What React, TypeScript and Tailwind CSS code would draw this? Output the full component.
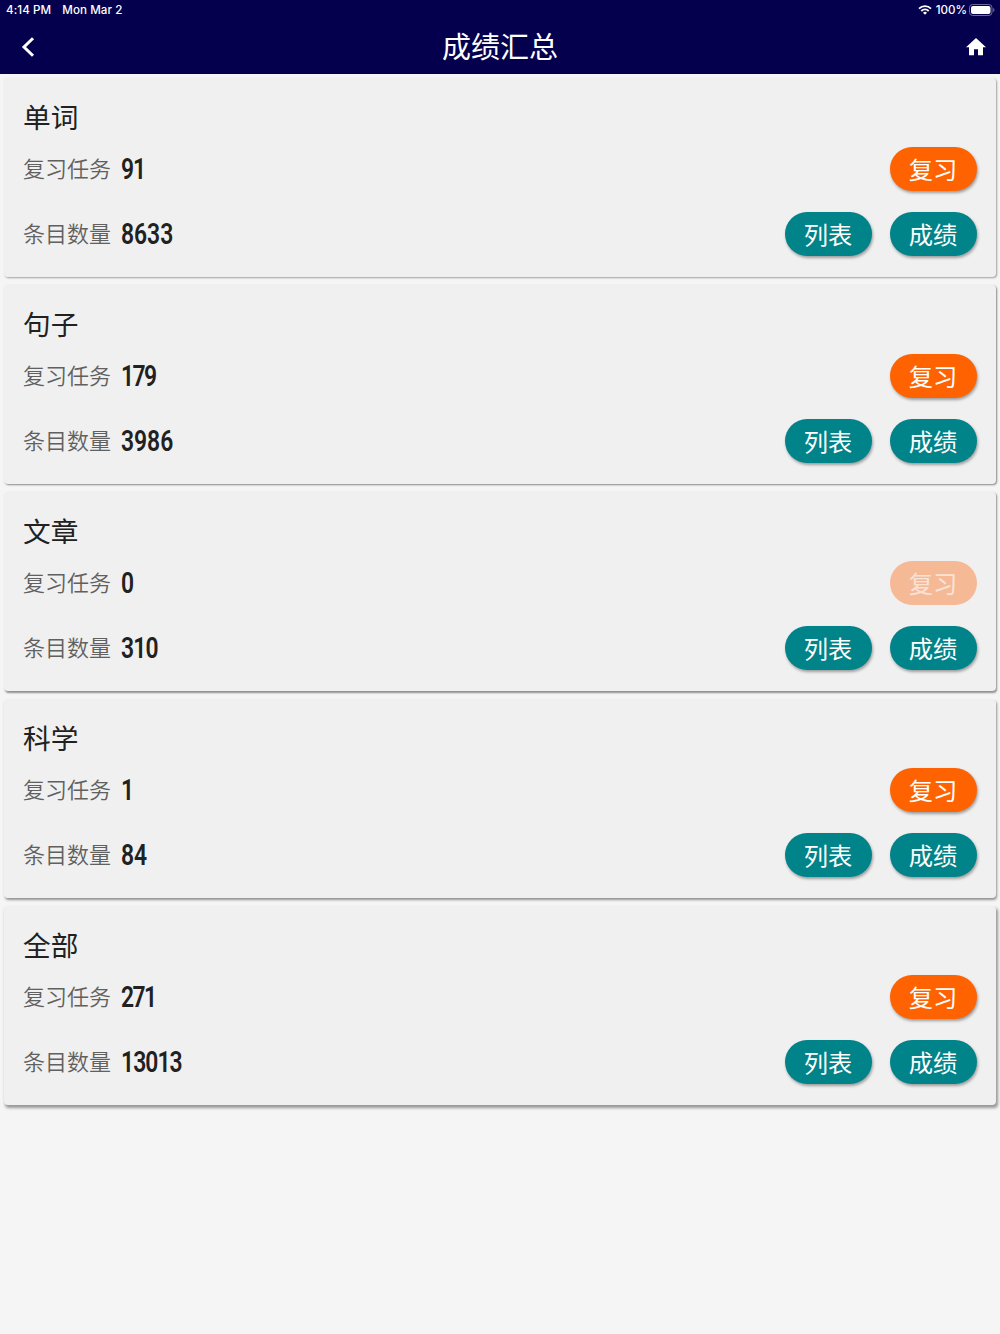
import React from "react";
import clsx from "clsx";

type Section = {
  title: string;
  tasks: number;
  items: number;
  shadow: string;
};

const SECTIONS: Section[] = [
  {
    title: "单词",
    tasks: 91,
    items: 8633,
    shadow: "shadow-[1px_1px_2px_rgba(0,0,0,0.35)]",
  },
  {
    title: "句子",
    tasks: 179,
    items: 3986,
    shadow: "shadow-[1px_1px_2px_rgba(0,0,0,0.45)]",
  },
  {
    title: "文章",
    tasks: 0,
    items: 310,
    shadow: "shadow-[1px_1.5px_2px_rgba(0,0,0,0.42)]",
  },
  {
    title: "科学",
    tasks: 1,
    items: 84,
    shadow: "shadow-[1px_2px_2.5px_rgba(0,0,0,0.4)]",
  },
  {
    title: "全部",
    tasks: 271,
    items: 13013,
    shadow: "shadow-[1.5px_2.5px_3px_rgba(0,0,0,0.38)]",
  },
];

export default function App() {
  return (
    <div className="min-h-[1334px] w-full bg-[#f5f5f5] font-['Roboto','Noto_Sans_CJK_SC',sans-serif] text-[#212121]">
      <header className="h-[74px] bg-[#04004d] text-white">
        <StatusBar />
        <nav className="grid h-[54px] grid-cols-[1fr_auto_1fr] items-center pr-3 pl-[21px]">
          <button aria-label="返回" className="w-6">
            <svg width="14" height="20" viewBox="0 0 14 20" fill="none">
              <path d="M12 1.2 3 10l9 8.8" stroke="white" strokeWidth="3" />
            </svg>
          </button>
          <h1 className="-ml-[9px] pt-[2px] text-[29px] leading-[50px]">成绩汇总</h1>
          <button aria-label="首页" className="flex w-6 justify-end justify-self-end">
            <svg width="24" height="24" viewBox="0 0 24 24" fill="white">
              <path d="M10 20.2v-6h4v6h5v-8h3L12 3 2 12.2h3v8z" />
            </svg>
          </button>
        </nav>
      </header>
      <main className="flex flex-col gap-2 px-1 pt-1">
        {SECTIONS.map((section) => (
          <SectionCard key={section.title} {...section} />
        ))}
      </main>
    </div>
  );
}

function StatusBar() {
  return (
    <div className="flex h-5 items-center justify-between pr-[5px] pl-[6px] font-['Inter',sans-serif] text-[11.6px] font-medium">
      <div className="flex gap-[11px] pt-[2px] tracking-[0.08px]">
        <span>4:14 PM</span>
        <span>Mon Mar 2</span>
      </div>
      <div className="flex items-center">
        <svg width="14" height="10" viewBox="0 0 14 10" fill="none" stroke="white">
          <path d="M1 3.7a8.5 8.5 0 0 1 12 0" strokeWidth="1.8" />
          <path d="M3.3 6a5.2 5.2 0 0 1 7.4 0" strokeWidth="1.8" />
          <path d="M7 9.8 5 7.8a2.8 2.8 0 0 1 4 0z" fill="white" stroke="none" />
        </svg>
        <span className="ml-1 pt-[2px]">100%</span>
        <svg className="ml-[2px]" width="26" height="12" viewBox="0 0 26 12">
          <rect x=".5" y=".5" width="22.5" height="11" rx="3.2" fill="none" stroke="#6e6b99" />
          <rect x="2" y="2" width="19.5" height="8" rx="2" fill="white" />
          <path d="M24.2 4v4a2.2 2.2 0 0 0 0-4" fill="#6e6b99" />
        </svg>
      </div>
    </div>
  );
}

function SectionCard({ title, tasks, items, shadow }: Section) {
  return (
    <section className={clsx("h-[199px] rounded-[4px] bg-[#f0f0f0] px-[19px] pt-[21px]", shadow)}>
      <h2 className="h-[39px] text-[27.7px] leading-[39px]">{title}</h2>
      <div className="mt-[9px] flex h-11 items-center">
        <Stat label="复习任务" value={tasks} />
        <PillButton color="bg-[#ff6200]" disabled={tasks === 0}>
          复习
        </PillButton>
      </div>
      <div className="mt-[21px] flex h-11 items-center gap-[18px]">
        <Stat label="条目数量" value={items} />
        <PillButton color="bg-[#008389]">列表</PillButton>
        <PillButton color="bg-[#008389]">成绩</PillButton>
      </div>
    </section>
  );
}

function digitSpacing(value: number) {
  const digits = String(value);
  const narrow = digits.replace(/[^17]/g, "").length;
  return (-3 * narrow) / digits.length;
}

function Stat({ label, value }: { label: string; value: number }) {
  return (
    <div className="flex flex-1 items-center">
      <span className="pt-[2px] text-[22px] leading-8 font-[350] text-[#606060]">{label}</span>
      <span
        className="ml-[10px] origin-left scale-x-[0.775] text-[29.5px] leading-8 font-semibold"
        style={{ letterSpacing: digitSpacing(value) }}
      >
        {value}
      </span>
    </div>
  );
}

function PillButton({
  color,
  disabled,
  children,
}: {
  color: string;
  disabled?: boolean;
  children: React.ReactNode;
}) {
  return (
    <button
      disabled={disabled}
      className={clsx(
        "flex h-11 w-[87px] items-center justify-center rounded-full pt-1 pr-px text-[24.3px] leading-8",
        disabled
          ? "bg-[#f6b996] text-[#f9e3d7]"
          : [color, "text-white shadow-[1px_2px_3px_rgba(0,0,0,0.35)]"],
      )}
    >
      {children}
    </button>
  );
}
